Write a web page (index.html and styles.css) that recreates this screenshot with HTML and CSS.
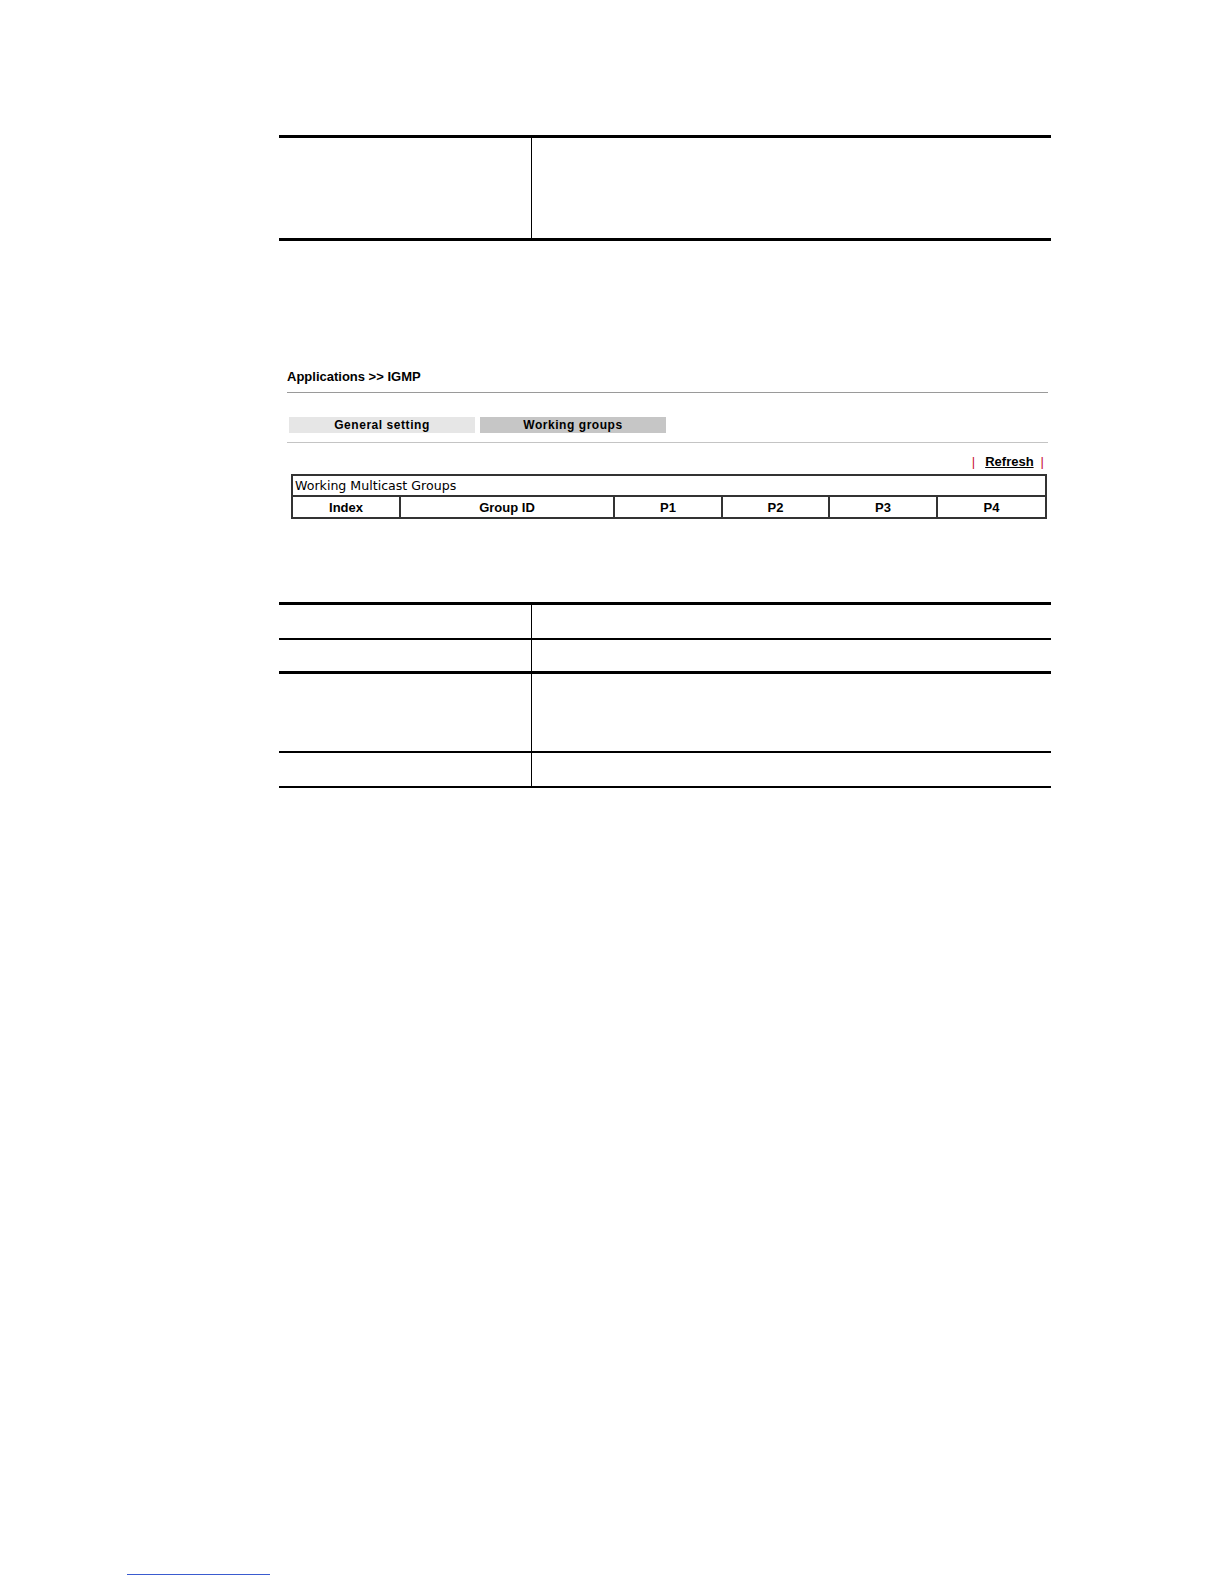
FILE: index.html
```html
<!DOCTYPE html>
<html>
<head>
<meta charset="utf-8">
<title>Applications &gt;&gt; IGMP</title>
<link rel="stylesheet" href="styles.css">
</head>
<body>
<div class="page">
  <table class="doc doc-top">
    <tr><td class="lbl"></td><td class="desc"></td></tr>
  </table>

  <div class="shot">
    <div class="crumb">Applications &gt;&gt; IGMP</div>
    <div class="rule"></div>
    <div class="tabs">
      <div class="tab tab-off">General setting</div>
      <div class="tab tab-on">Working groups</div>
    </div>
    <div class="rule rule-light"></div>
    <div class="actions"><span class="bar">|</span><a class="refresh">Refresh</a><span class="bar bar-end">|</span></div>
    <table class="groups">
      <colgroup>
        <col class="c-idx">
        <col class="c-gid">
        <col class="c-p1">
        <col class="c-p2">
        <col class="c-p3">
        <col class="c-p4">
      </colgroup>
      <tr><td class="caption" colspan="6">Working Multicast Groups</td></tr>
      <tr class="heads">
        <th>Index</th>
        <th>Group ID</th>
        <th>P1</th>
        <th>P2</th>
        <th>P3</th>
        <th>P4</th>
      </tr>
    </table>
  </div>

  <table class="doc doc-bottom">
    <tr class="r1"><td class="lbl"></td><td class="desc"></td></tr>
    <tr class="r2"><td class="lbl"></td><td class="desc"></td></tr>
    <tr class="r3"><td class="lbl"></td><td class="desc"></td></tr>
    <tr class="r4"><td class="lbl"></td><td class="desc"></td></tr>
  </table>
</div>
<div class="footnote-rule"></div>
</body>
</html>
```
FILE: styles.css
```css
html, body {
  margin: 0;
  padding: 0;
  background: #fff;
}
body {
  font-family: "Liberation Sans", Arial, sans-serif;
  color: #000;
  width: 1224px;
  height: 1584px;
  position: relative;
}
.page {
  margin-left: 279px;
  width: 772px;
  padding-top: 135px;
}
.doc {
  width: 772px;
  border-collapse: collapse;
  table-layout: fixed;
}
.doc td {
  padding: 0;
}
.doc .lbl {
  width: 252px;
  border-right: 1px solid #000;
}
.doc-top {
  border-top: 3px solid #000;
  border-bottom: 3px solid #000;
}
.doc-top td {
  height: 100px;
}

.shot {
  margin-left: 8px;
  width: 761px;
  padding-top: 127px;
}
.crumb {
  font-size: 13px;
  font-weight: bold;
  height: 18px;
  line-height: 18px;
}
.rule {
  margin-top: 6px;
  height: 1px;
  background: #9a9a9a;
}
.rule-light {
  margin-top: 9px;
  background: #c4c4c4;
}
.tabs {
  display: flex;
  gap: 5px;
  padding-left: 2px;
  margin-top: 24px;
}
.tab {
  width: 186px;
  height: 16px;
  line-height: 16px;
  text-align: center;
  font-size: 12px;
  font-weight: bold;
  letter-spacing: 0.55px;
}
.tab-off { background: #e6e6e6; }
.tab-on { background: #c6c6c6; }

.actions {
  display: flex;
  justify-content: flex-end;
  align-items: center;
  gap: 10px;
  padding-right: 4px;
  margin-top: 9px;
  height: 18px;
  font-size: 13px;
}
.bar {
  color: #c8102e;
  font-weight: normal;
}
.bar-end {
  margin-left: -3px;
}
.refresh {
  font-weight: bold;
  text-decoration: underline;
  color: #000;
}
.groups {
  margin-top: 4px;
  margin-left: 4px;
  width: 754px;
  border-collapse: collapse;
  table-layout: fixed;
  border: 2px solid #333;
}
.groups td, .groups th {
  padding: 0;
  border: 2px solid #333;
}
.caption {
  font-family: "DejaVu Sans", Verdana, sans-serif;
  font-size: 12.6px;
  height: 19px;
  padding-left: 2px !important;
  text-align: left;
}
.heads th {
  height: 20px;
  font-size: 13px;
  font-weight: bold;
  text-align: center;
}
.c-idx { width: 108px; }
.c-gid { width: 214px; }
.c-p1 { width: 108px; }
.c-p2 { width: 107px; }
.c-p3 { width: 108px; }
.c-p4 { width: 109px; }

.doc-bottom {
  margin-top: 83px;
  border-top: 3px solid #000;
  border-bottom: 2px solid #000;
}
.doc-bottom .r1 td { height: 33px; border-bottom: 2px solid #000; }
.doc-bottom .r2 td { height: 31px; border-bottom: 3px solid #000; }
.doc-bottom .r3 td { height: 77px; border-bottom: 2px solid #000; }
.doc-bottom .r4 td { height: 33px; }

.footnote-rule {
  position: absolute;
  left: 127px;
  top: 1574px;
  width: 143px;
  height: 1px;
  background: #3a5bd0;
}
```
